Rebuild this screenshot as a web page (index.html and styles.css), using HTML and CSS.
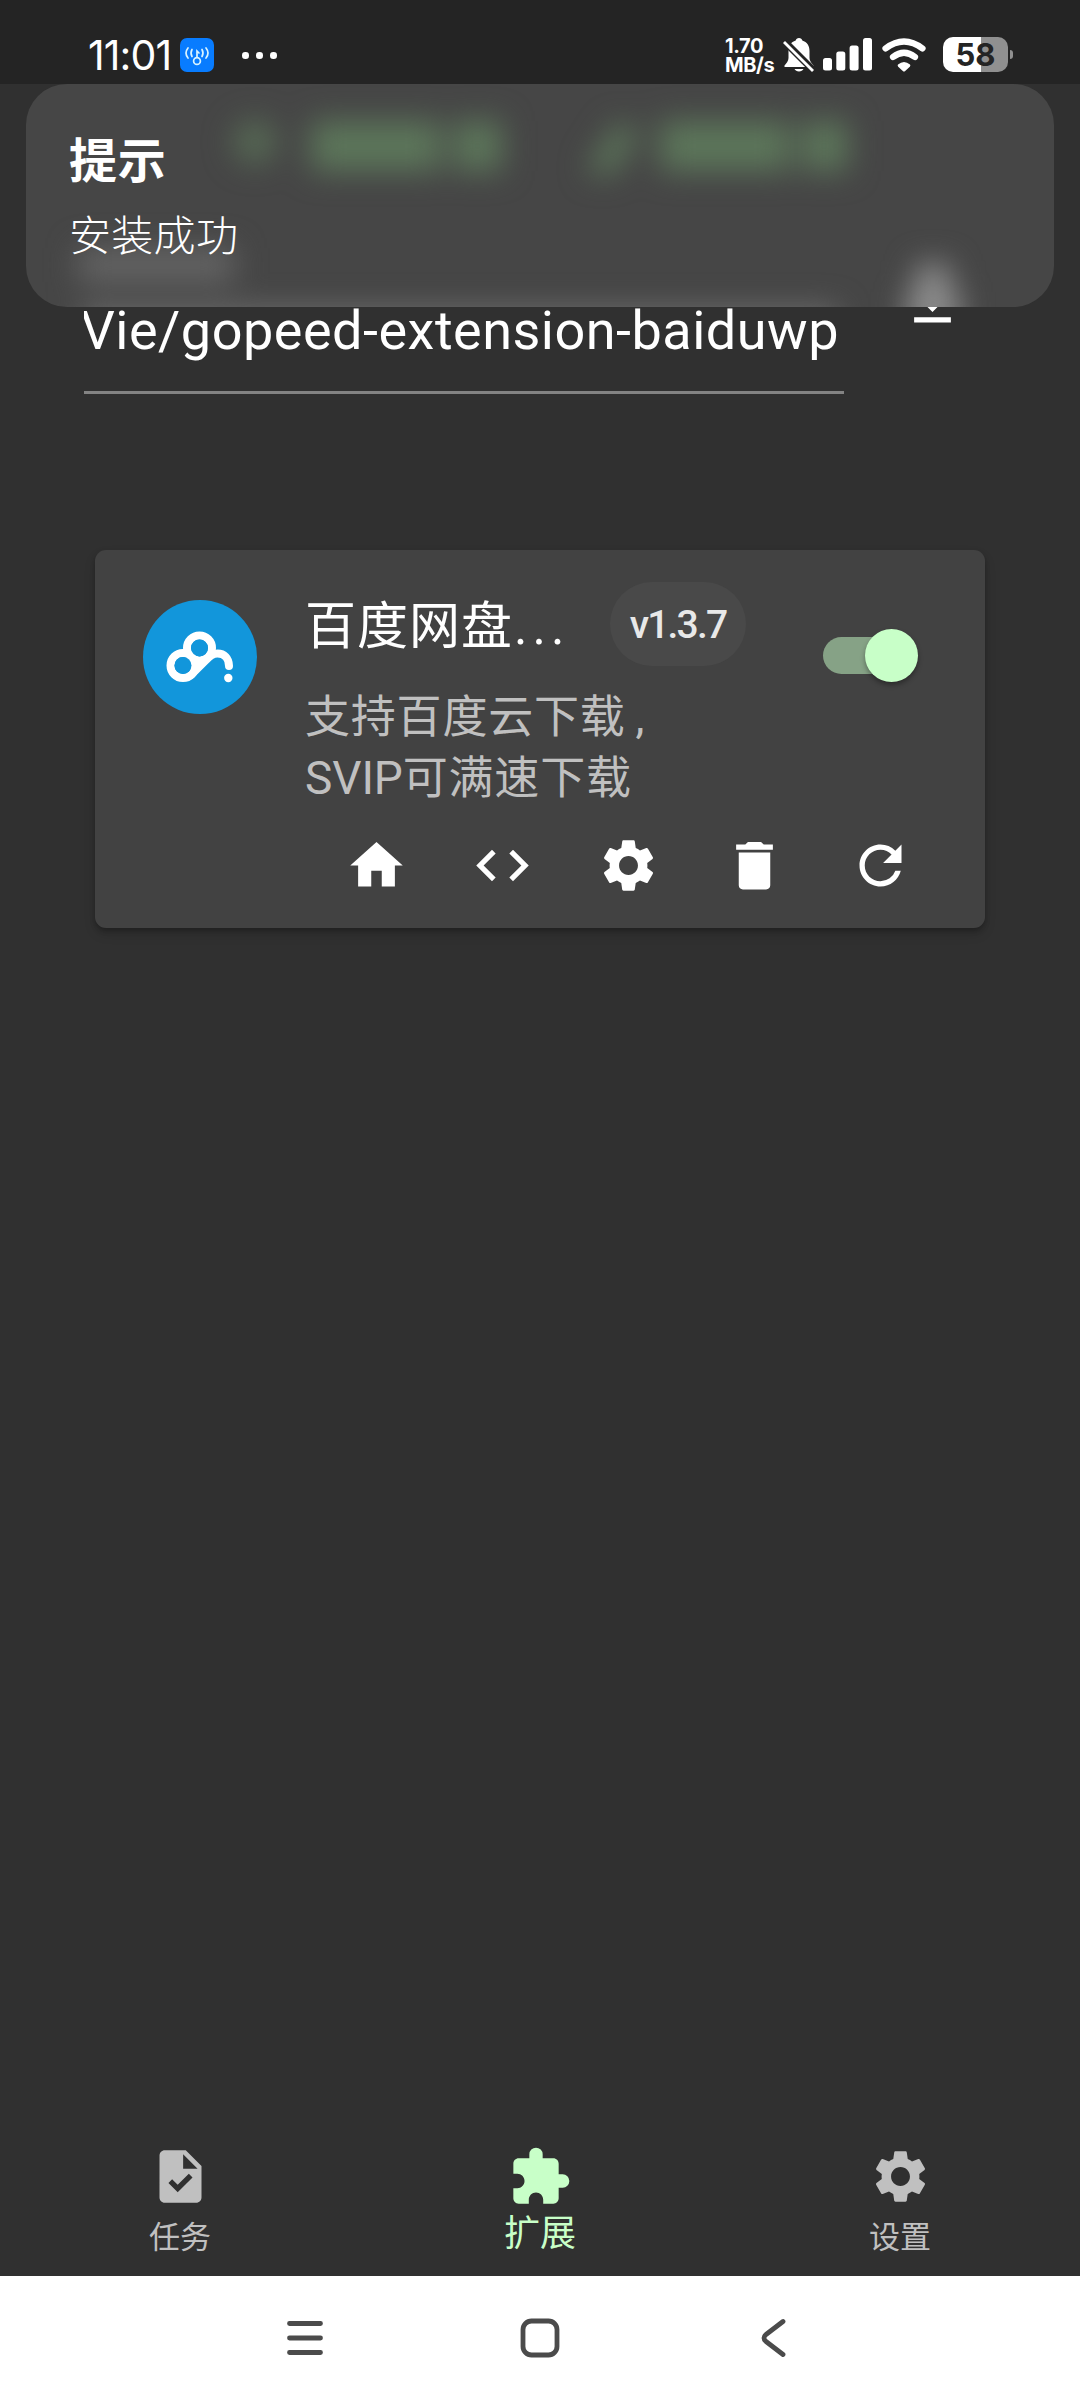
FILE: index.html
```html
<!DOCTYPE html>
<html lang="zh-CN">
<head>
<meta charset="utf-8">
<title>扩展</title>
<link rel="stylesheet" href="styles.css">
</head>
<body>
<div class="screen">
  <header class="status">
    <div class="status-left">
      <span class="clock">11:01</span>
      <svg class="cast" width="34" height="34" viewBox="0 0 34 34">
        <rect width="34" height="34" rx="7" fill="#087cff"/>
        <g fill="none" stroke="#d9f4ff" stroke-width="1.7" stroke-linecap="round">
          <circle cx="17" cy="23" r="3.4"/><path d="M17 19V13l2 2M12 11.500q-2 3.500 0 7M8 10q-4 5 0 10M22 11.500q2 3.500 0 7M26 10q4 5 0 10"/>
        </g>
      </svg>
      <span class="dots"><i></i><i></i><i></i></span>
    </div>
    <div class="status-right">
      <span class="speed"><span>1.70</span><span>MB/s</span></span>
      <svg class="bell" width="32" height="36" viewBox="0 0 32 36">
        <path fill="#fff" d="M16 1c-1.800 0-3 1-3.300 2.600C8 5 5.500 9 5.500 14v7c0 3-2 5-4 7.500V30h29v-1.500c-2-2.500-4-4.500-4-7.500v-7c0-5-2.500-9-7.200-10.400C19 2 17.800 1 16 1zM11.500 32h9c-.8 1.600-2.400 2.400-4.500 2.400s-3.700-.8-4.500-2.400z"/>
        <path stroke="#242424" stroke-width="7" d="M0 3l31 31"/>
        <path stroke="#fff" stroke-width="2.800" d="M1 5l29 29"/>
      </svg>
      <svg class="signal" width="49" height="33" viewBox="0 0 49 33" fill="#fff">
        <rect y="20" width="9" height="12.500" rx="2.500"/><rect x="13.300" y="13.500" width="9" height="19" rx="2.500"/><rect x="26.600" y="7.500" width="9" height="25" rx="2.500"/><rect x="40" y="0" width="9" height="32.500" rx="2.500"/>
      </svg>
      <svg class="wifi" width="44" height="34" viewBox="0 0 44 34">
        <g fill="none" stroke="#fff" stroke-width="6.200" stroke-linecap="round"><path d="M3.500 10.500Q22-3.500 40.500 10.500"/><path d="M11 19Q22 10.500 33 19"/></g>
        <path fill="#fff" d="M16 26.500q6-5 12 0 .8 1-.2 2.200L23.200 33q-1.200 1-2.400 0l-4.600-4.300q-1-1.200-.2-2.200z"/>
      </svg>
      <span class="battery">58</span><i class="nub"></i>
    </div>
  </header>

  <main class="content">
    <div class="install">
      <div class="field"><span>Vie/gopeed-extension-baiduwp</span></div>
      <svg class="icon download" viewBox="0 0 24 24"><path d="M19 9h-4V3H9v6H5l7 7 7-7zM5 18v2h14v-2H5z"/></svg>
    </div>

    <section class="card">
      <svg class="avatar" width="114" height="114" viewBox="0 0 114 114">
        <circle cx="57" cy="57" r="57" fill="#1296db"/>
        <g fill="none" stroke="#fff" stroke-width="8">
          <circle cx="40" cy="65.500" r="12.500"/><circle cx="56.500" cy="48" r="12.500"/>
          <path stroke-linecap="round" d="M48 75L63 60C67 55.500 70 53.500 74.500 53.500C81 53.500 86 58 86 66"/>
        </g>
        <path fill="#fff" d="M42 56l6-6 8 12 8-3-15 16z"/>
        <circle cx="40" cy="65.500" r="8.500" fill="#1296db"/><circle cx="56.500" cy="48" r="8.500" fill="#1296db"/>
        <circle cx="85.300" cy="78" r="4.200" fill="#fff"/>
      </svg>
      <div class="info">
        <div class="title-row"><h2>百度网盘<b>...</b></h2><span class="badge">v1.3.7</span></div>
        <p>支持百度云下载<span class="comma">,</span><br><span class="latin">SVIP</span>可满速下载</p>
        <div class="actions">
          <svg class="icon" viewBox="0 0 24 24"><path d="M10 20v-6h4v6h5v-8h3L12 3 2 12h3v8z"/></svg>
          <svg class="icon" viewBox="0 0 24 24"><path d="M9.400 16.600L4.800 12l4.600-4.600L8 6l-6 6 6 6 1.400-1.400zm5.200 0l4.600-4.600-4.600-4.600L16 6l6 6-6 6-1.400-1.400z"/></svg>
          <svg class="icon" viewBox="0 0 24 24"><path d="M19.140 12.940c.04-.3.06-.61.06-.94 0-.32-.02-.64-.07-.94l2.030-1.580c.18-.14.23-.41.12-.61l-1.920-3.320c-.12-.22-.37-.29-.59-.22l-2.390.96c-.5-.38-1.030-.7-1.620-.94l-.36-2.540c-.04-.24-.24-.41-.48-.41h-3.840c-.24 0-.43.17-.47.41l-.36 2.540c-.59.24-1.130.57-1.620.94l-2.390-.96c-.22-.08-.47 0-.59.22L2.740 8.870c-.12.21-.08.47.12.61l2.030 1.580c-.05.3-.09.63-.09.94s.02.64.07.94l-2.030 1.580c-.18.14-.23.41-.12.61l1.920 3.320c.12.22.37.29.59.22l2.390-.96c.5.38 1.030.7 1.620.94l.36 2.540c.05.24.24.41.48.41h3.840c.24 0 .44-.17.47-.41l.36-2.540c.59-.24 1.130-.56 1.620-.94l2.390.96c.22.08.47 0 .59-.22l1.920-3.320c.12-.22.07-.47-.12-.61l-2.010-1.580zM12 15.600c-1.980 0-3.600-1.620-3.600-3.600s1.620-3.600 3.600-3.600 3.600 1.620 3.600 3.600-1.620 3.600-3.600 3.600z"/></svg>
          <svg class="icon" viewBox="0 0 24 24"><path d="M6 19.500c0 .9.700 1.600 1.600 1.600h8.800c.9 0 1.600-.7 1.600-1.600V7H6v12.500zM19 4h-3.500l-1-1h-5l-1 1H5v2h14V4z"/></svg>
          <svg class="icon" viewBox="0 0 24 24"><path d="M17.650 6.350A7.958 7.958 0 0 0 12 4c-4.420 0-7.990 3.580-7.990 8s3.570 8 7.990 8c3.730 0 6.840-2.550 7.730-6h-2.080A5.990 5.990 0 0 1 12 18c-3.310 0-6-2.690-6-6s2.690-6 6-6c1.660 0 3.140.69 4.220 1.780L13 11h7V4l-2.350 2.350z"/></svg>
        </div>
      </div>
      <div class="switch"><i></i></div>
    </section>
  </main>

  <nav class="tabs">
    <div class="tab"><svg class="icon" viewBox="0 0 24 24"><path d="M14 2H6c-1.100 0-1.990.9-1.990 2L4 20c0 1.100.89 2 1.990 2H18c1.100 0 2-.9 2-2V8l-6-6zm-3.060 16L7.400 14.460l1.410-1.410 2.120 2.120 4.240-4.240 1.410 1.410L10.940 18zM13 9V3.500L18.500 9H13z"/></svg><span>任务</span></div>
    <div class="tab active"><svg class="icon" viewBox="0 0 24 24"><path d="M20.500 11H19V7c0-1.100-.9-2-2-2h-4V3.500a2.500 2.500 0 0 0-5 0V5H4c-1.100 0-1.990.9-1.990 2v3.800H3.500c1.490 0 2.700 1.210 2.700 2.700s-1.210 2.700-2.700 2.700H2V20c0 1.100.9 2 2 2h3.800v-1.500c0-1.490 1.210-2.700 2.700-2.700s2.700 1.210 2.700 2.700V22H17c1.100 0 2-.9 2-2v-4h1.500a2.500 2.500 0 0 0 0-5z"/></svg><span>扩展</span></div>
    <div class="tab"><svg class="icon" viewBox="0 0 24 24"><path d="M19.140 12.940c.04-.3.06-.61.06-.94 0-.32-.02-.64-.07-.94l2.030-1.580c.18-.14.23-.41.12-.61l-1.920-3.320c-.12-.22-.37-.29-.59-.22l-2.390.96c-.5-.38-1.030-.7-1.620-.94l-.36-2.540c-.04-.24-.24-.41-.48-.41h-3.840c-.24 0-.43.17-.47.41l-.36 2.540c-.59.24-1.130.57-1.620.94l-2.390-.96c-.22-.08-.47 0-.59.22L2.740 8.870c-.12.21-.08.47.12.61l2.030 1.580c-.05.3-.09.63-.09.94s.02.64.07.94l-2.030 1.580c-.18.14-.23.41-.12.61l1.920 3.320c.12.22.37.29.59.22l2.390-.96c.5.38 1.030.7 1.620.94l.36 2.540c.05.24.24.41.48.41h3.840c.24 0 .44-.17.47-.41l.36-2.540c.59-.24 1.130-.56 1.620-.94l2.390.96c.22.08.47 0 .59-.22l1.920-3.320c.12-.22.07-.47-.12-.61l-2.010-1.580zM12 15.600c-1.980 0-3.600-1.620-3.600-3.600s1.620-3.600 3.600-3.600 3.600 1.620 3.600 3.600-1.620 3.600-3.600 3.600z"/></svg><span>设置</span></div>
  </nav>

  <footer class="sysnav">
    <svg width="40" height="40" viewBox="0 0 40 40"><path d="M4.500 5.500h31M4.500 20h31M4.500 34.500h31"/></svg>
    <svg width="40" height="40" viewBox="0 0 40 40"><rect x="3" y="3" width="34" height="34" rx="8.500"/></svg>
    <svg width="40" height="40" viewBox="0 0 40 40"><path d="M29 3.500L12 16.500q-4 3.500 0 7L29 36.500"/></svg>
  </footer>

  <div class="toast">
    <svg class="frost" width="1028" height="223" viewBox="0 0 1028 223">
      <defs><filter id="soft" x="-60" y="-60" width="1150" height="400" filterUnits="userSpaceOnUse" color-interpolation-filters="sRGB"><feGaussianBlur stdDeviation="15"/></filter></defs>
      <g filter="url(#soft)">
        <g fill="#5c765a">
          <circle cx="229" cy="58" r="22" opacity=".75"/>
          <rect x="285" y="37" width="130" height="50"/><rect x="428" y="37" width="48" height="50"/>
          <path d="M562 84l30-46 22 10-26 42h-24z"/>
          <rect x="634" y="37" width="130" height="50"/><rect x="776" y="37" width="46" height="50"/>
        </g>
        <rect x="52" y="164" width="156" height="34" fill="#656565"/>
        <rect x="56" y="224" width="756" height="50" fill="#6c6c6c"/>
        <path d="M890 180h34v28h10v42h-54v-42h10z" fill="#8c8c8c"/>
      </g>
    </svg>
    <strong>提示</strong>
    <span>安装成功</span>
  </div>
</div>
</body>
</html>
```
FILE: styles.css
```css
* { box-sizing: border-box; margin: 0; padding: 0; }
body { background: #303030; color: #fff; font-family: Roboto, "Noto Sans CJK SC", sans-serif; }
svg { display: block; flex: none; }
i { display: block; flex: none; }
.screen { position: relative; width: 1080px; height: 2400px; display: flex; flex-direction: column; overflow: hidden; }

.status { height: 84px; flex: none; background: #242424; display: flex; justify-content: space-between; padding: 0 67px 0 88px; }
.status-left, .status-right { display: flex; align-items: flex-start; }
.clock { width: 92px; padding-top: 31px; font: 400 41px/48px Inter, sans-serif; letter-spacing: -.900px; white-space: nowrap; }
.cast { margin-top: 38px; }
.dots { display: flex; gap: 7.500px; margin: 52px 0 0 28px; }
.dots i { width: 6.500px; height: 6.500px; border-radius: 50%; background: #fff; }
.speed { display: flex; flex-direction: column; width: 58px; margin-top: 37px; font: 700 20px/19px Inter, sans-serif; letter-spacing: -0.400px; }
.bell { margin-top: 37px; }
.signal { margin: 38px 0 0 8px; }
.wifi { margin: 38px 0 0 10px; }
.battery { width: 65px; height: 35px; margin: 37px 0 0 17px; border-radius: 10px; background: linear-gradient(90deg, #fff 38px, #909090 38px); color: #242424; font: 700 31px/35px Inter, sans-serif; text-align: center; }
.nub { width: 3px; height: 9px; margin: 50px 0 0 2px; border-radius: 0 4px 4px 0; background: #909090; }

.content { flex: 1; display: flex; flex-direction: column; padding-top: 186px; }
.install { display: flex; height: 124px; padding-left: 84px; }
.field { width: 760px; border-bottom: 3px solid #838383; display: flex; justify-content: flex-end; overflow: hidden; padding: 23px 5px 0 0; font-size: 54px; line-height: 76px; letter-spacing: .500px; white-space: nowrap; }
.icon { width: 63px; height: 63px; fill: currentColor; }
.download { margin-left: 57px; }

.card { width: 890px; height: 378px; margin: 156px 0 0 95px; padding-left: 48px; border-radius: 11px; background: #424242; display: flex; box-shadow: 0 3px 5px rgba(0,0,0,.22), 0 6px 12px rgba(0,0,0,.14); }
.avatar { margin-top: 50px; }
.info { width: 519px; padding: 32px 0 0 48px; }
.title-row { display: flex; height: 84px; }
h2 { width: 305px; padding-top: 3px; font-size: 51px; font-weight: 400; line-height: 84px; letter-spacing: 1px; white-space: nowrap; }
h2 b { font-weight: 400; letter-spacing: 5px; margin-left: 1px; }
.badge { width: 136px; border-radius: 42px; background: #494949; color: #e8e8e8; text-align: center; font-size: 39px; font-weight: 500; line-height: 86px; letter-spacing: -1.800px; }
p { margin-top: 21px; color: #c0c0c0; font-size: 45px; line-height: 61px; letter-spacing: .8px; white-space: nowrap; }
.latin { font-size: 46px; letter-spacing: -.100px; }
.comma { margin-left: 10px; }
.actions { display: flex; gap: 63px; margin: 24.500px 0 0 40px; }
.switch { width: 92px; height: 37px; margin: 87px 0 0 46.500px; border-radius: 19px; background: #86a286; display: flex; justify-content: flex-end; align-items: center; }
.switch i { width: 53px; height: 53px; margin-right: -3px; border-radius: 50%; background: #c8ffc8; box-shadow: 0 3px 5px rgba(0,0,0,.35); }

.tabs { height: 131px; flex: none; display: grid; grid-template-columns: repeat(3, 1fr); color: #c0c0c0; }
.tabs .tab { display: flex; flex-direction: column; align-items: center; width: 360px; font-size: 31px; line-height: 38px; }
.tab .icon { flex: none; }
.tab span { margin-top: 11px; }
.tabs .active { color: #c8ffc8; font-size: 36px; line-height: 42px; }
.active .icon { width: 64px; height: 64px; }
.active span { margin-top: 4px; }

.sysnav { height: 124px; flex: none; background: #fff; display: flex; gap: 194.500px; padding: 42px 0 0 285px; }
.sysnav svg { fill: none; stroke: #4b4b4b; stroke-width: 4.800px; stroke-linecap: round; stroke-linejoin: round; }

.toast { position: absolute; left: 26px; top: 84px; width: 1028px; height: 223px; border-radius: 41px; padding: 43px; display: flex; flex-direction: column; background: #464646; overflow: hidden; }
.frost { position: absolute; inset: 0; }
.toast strong { position: relative; font-size: 48px; font-weight: 700; line-height: 70px; letter-spacing: .800px; }
.toast span { position: relative; margin-top: 10px; font-size: 42px; font-weight: 300; line-height: 60px; letter-spacing: .300px; }
```
